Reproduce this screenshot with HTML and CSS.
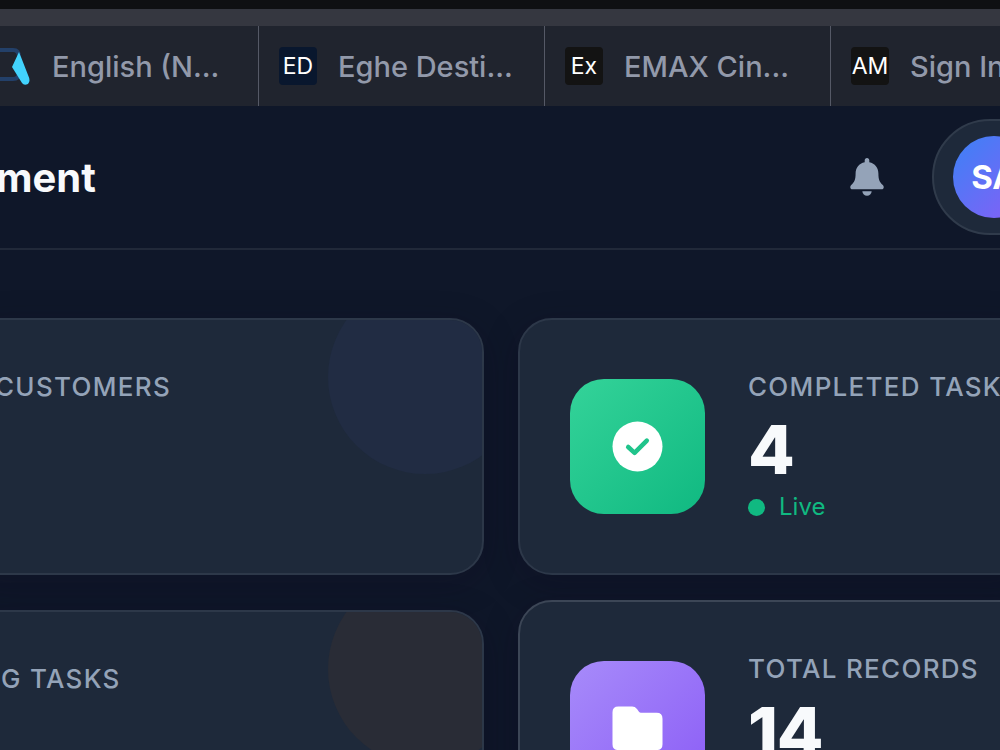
FILE: index.html
```html
<!DOCTYPE html>
<html lang="en">
<head>
    <meta charset="UTF-8">
    <meta name="viewport" content="width=device-width, initial-scale=1.0">
    <title>Dashboard</title>
    <link rel="stylesheet" href="styles.css">
</head>
<body>
    <div class="window-edge"></div>
    <div class="toolbar-edge"></div>
    <nav class="tabs">
        <a class="tab" href="#">
            <svg class="favicon" viewBox="0 0 38 38" aria-hidden="true">
                <path d="M0 3H20Q26 3 26 10V26Q26 32 20 32H0" fill="none" stroke="#234069" stroke-width="4"/>
                <path d="M19 20L26 5Q27 8 28 10L35 28Q38 34 35 37Q31 39 29 36Z" fill="#42d3fd"/>
            </svg>
            <span>English (N...</span>
        </a>
        <a class="tab" href="#">
            <span class="favicon favicon-navy">ED</span>
            <span>Eghe Desti...</span>
        </a>
        <a class="tab" href="#">
            <span class="favicon">Ex</span>
            <span>EMAX Cin...</span>
        </a>
        <a class="tab" href="#">
            <span class="favicon">AM</span>
            <span>Sign In</span>
        </a>
    </nav>

    <header class="topbar">
        <h1>ment</h1>
        <button class="bell" type="button" aria-label="Notifications">
            <svg viewBox="0 0 34 38" aria-hidden="true">
                <path d="M17 0c-1.400 0-2.300 1-2.300 2.300v2C9 5.500 5.600 10 5.600 15.500c0 6-1.200 8.500-4.400 11.600-1.800 1.800-.8 4.100 1.200 4.100h29.200c2 0 3-2.300 1.200-4.100-3.200-3.100-4.400-5.600-4.400-11.600C28.400 10 25 5.500 19.300 4.300v-2C19.300 1 18.400 0 17 0z"/>
                <path d="M12.300 33.200h9.400c-.2 2.700-2.200 4.500-4.700 4.500s-4.500-1.800-4.700-4.500z"/>
            </svg>
        </button>
        <button class="profile" type="button">
            <span class="avatar">SA</span>
        </button>
    </header>

    <main class="stats">
        <div class="column">
            <section class="card card-blue">
                <div class="info">
                    <h2>CUSTOMERS</h2>
                </div>
            </section>
            <section class="card card-amber">
                <div class="info">
                    <h2>G TASKS</h2>
                </div>
            </section>
        </div>
        <div class="column column-tight">
            <section class="card">
                <div class="icon icon-green">
                    <svg viewBox="0 0 52 52" aria-hidden="true">
                        <circle cx="26" cy="26" r="25.500" fill="#fff"/>
                        <path d="M16.500 26.500L23 32.500L35.500 20" fill="none" stroke="#20c48b" stroke-width="4.600" stroke-linecap="round" stroke-linejoin="round"/>
                    </svg>
                </div>
                <div class="info">
                    <h2>COMPLETED TASKS</h2>
                    <p class="value">4</p>
                    <p class="live">Live</p>
                </div>
            </section>
            <section class="card card-active">
                <div class="icon icon-purple">
                    <svg viewBox="0 0 52 52" aria-hidden="true">
                        <path d="M6.500 3.500H20.500Q23.500 3.500 25.500 6L27.500 9Q28.300 10 29.500 10H45.500Q51.500 10 51.500 16V42Q51.500 48 45.500 48H6.500Q.5 48 .5 42V9.500Q.5 3.500 6.500 3.500Z" fill="#fff"/>
                    </svg>
                </div>
                <div class="info">
                    <h2>TOTAL RECORDS</h2>
                    <p class="value">14</p>
                </div>
            </section>
        </div>
    </main>
</body>
</html>
```
FILE: styles.css
```css
* {
    box-sizing: border-box;
}
body {
    margin: 0;
    height: 100vh;
    overflow: hidden;
    background: #0f1729;
    color: #f8fafc;
    font-family: Inter, sans-serif;
}
h1, h2, p {
    margin: 0;
}
button {
    font-family: inherit;
    cursor: pointer;
}

/* browser chrome */
.window-edge {
    height: 9px;
    background: #0f1013;
}
.toolbar-edge {
    height: 17px;
    background: #353740;
}
.tabs {
    display: flex;
    height: 80px;
    margin-left: -28px;
    background: #20242e;
}
.tab {
    display: flex;
    align-items: center;
    flex: 0 0 286px;
    gap: 21px;
    padding-left: 20px;
    border-left: 1px solid #555966;
    color: #9299aa;
    font-size: 29px;
    font-weight: 500;
    text-decoration: none;
    white-space: nowrap;
}
.favicon {
    display: flex;
    align-items: center;
    justify-content: center;
    flex: none;
    width: 38px;
    height: 38px;
    border-radius: 4px;
    background: #131313;
    color: #fff;
    font-size: 23px;
    font-weight: 400;
    overflow: hidden;
}
.favicon-navy {
    background: #09172e;
}
svg.favicon {
    background: none;
}

/* header */
.topbar {
    display: flex;
    align-items: center;
    margin-right: -56px;
    padding: 13px 0;
    border-bottom: 2px solid #212939;
}
.topbar h1 {
    margin-left: -4px;
    font-size: 40px;
    font-weight: 700;
}
.bell {
    margin-left: auto;
    margin-right: 48px;
    padding: 0;
    border: 0;
    background: none;
}
.bell svg {
    display: block;
    width: 34px;
    height: 38px;
    fill: #94a3b8;
}
.profile {
    padding: 15px 19px;
    border: 2px solid #303b4b;
    border-radius: 58px;
    background: #1e293a;
}
.avatar {
    display: flex;
    align-items: center;
    justify-content: center;
    width: 82px;
    height: 82px;
    border-radius: 50%;
    background: linear-gradient(135deg, #3b82f6, #8b5cf6);
    color: #fff;
    font-size: 33px;
    font-weight: 700;
}

/* stat cards */
.stats {
    display: grid;
    grid-template-columns: repeat(2, minmax(0, 1fr));
    gap: 34px;
    margin: 0 -36px 0 -34px;
    padding-top: 68px;
}
.column {
    display: flex;
    flex-direction: column;
    gap: 35px;
}
.column-tight {
    gap: 25px;
}
.card {
    position: relative;
    display: flex;
    gap: 43px;
    min-height: 257px;
    padding: 50px;
    border: 2px solid #2d3849;
    border-radius: 34px;
    background: #1e293a;
    box-shadow: 0 8px 34px rgba(16, 8, 30, 0.25);
    overflow: hidden;
}
.card-active {
    border-color: #3c4656;
}
.card-blue {
    padding-left: 27px;
}
.card-amber {
    padding-left: 33px;
}
.card-blue::after, .card-amber::after {
    content: "";
    position: absolute;
    top: -40px;
    right: -40px;
    width: 194px;
    height: 194px;
    border-radius: 50%;
    background: #212c43;
}
.card-amber::after {
    background: #292c36;
}
.icon {
    display: flex;
    align-items: center;
    justify-content: center;
    flex: none;
    align-self: center;
    width: 135px;
    height: 135px;
    border-radius: 34px;
}
.icon svg {
    width: 51px;
    height: 51px;
}
.icon-green {
    background: linear-gradient(135deg, #34d399, #10b981);
}
.icon-purple {
    background: linear-gradient(135deg, #a78bfa, #8b5cf6);
}
.info h2 {
    color: #94a3b8;
    font-size: 26px;
    font-weight: 500;
    line-height: 34px;
    letter-spacing: 0.05em;
    white-space: nowrap;
}
.value {
    margin-top: 3px;
    font-size: 68px;
    font-weight: 800;
    line-height: 84px;
    letter-spacing: -0.02em;
}
.live {
    display: flex;
    align-items: center;
    gap: 14px;
    color: #10b981;
    font-size: 24px;
    line-height: 32px;
}
.live::before {
    content: "";
    width: 17px;
    height: 17px;
    border-radius: 50%;
    background: #10b981;
}
```
